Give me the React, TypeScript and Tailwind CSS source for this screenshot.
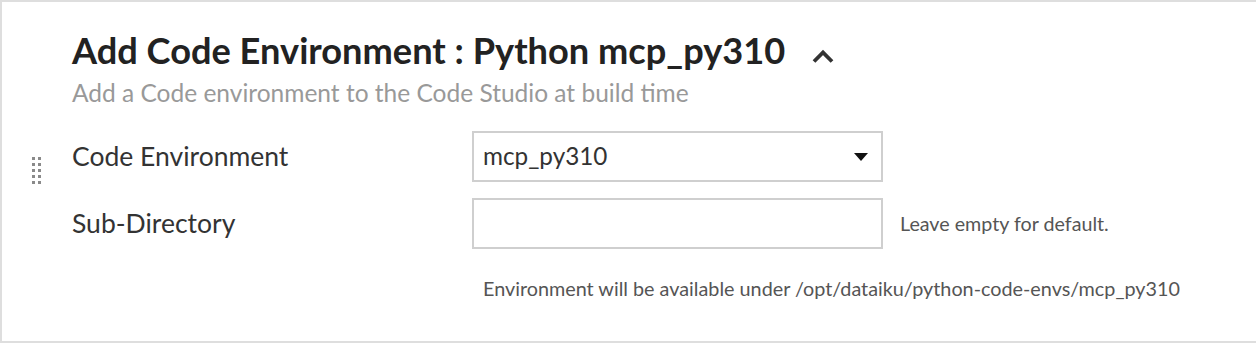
import React from 'react';

function DragHandle() {
  return (
    <div className="grid grid-cols-2 gap-x-[3px] gap-y-[3px] w-[9px]">
      {Array.from({ length: 10 }).map((_, i) => (
        <span key={i} className="block w-[3px] h-[3px] bg-[#8a8a8a]" />
      ))}
    </div>
  );
}

function ChevronUp() {
  return (
    <svg width="22" height="17" viewBox="0 0 22 17" className="text-[#333] mt-[19px] shrink-0">
      <path d="M2 13.5 L11 4.5 L20 13.5" fill="none" stroke="currentColor" strokeWidth="3.8" />
    </svg>
  );
}

export default function App() {
  return (
    <div className="w-[1256px] h-[346px] bg-white font-['Source_Sans_Pro','Lato',sans-serif] overflow-hidden">
      <div className="w-[1260px] h-[343px] border-2 border-r-0 border-[#dedede] flex">
        <div className="w-[70px] shrink-0 pt-[155px] pl-[30px]">
          <DragHandle />
        </div>
        <div className="flex-1 flex flex-col">
          <div className="flex items-start gap-[27px] mt-[27px]">
            <h2 className="text-[36.2px] leading-[43px] font-bold text-[#222]">
              Add Code Environment : Python mcp_py310
            </h2>
            <ChevronUp />
          </div>
          <p className="text-[24.5px] leading-[28px] text-[#999] mt-[7px]">
            Add a Code environment to the Code Studio at build time
          </p>

          <div className="flex items-center mt-[24px]">
            <label className="w-[400px] text-[26.5px] leading-[32px] text-[#333] -translate-y-[1px]">Code Environment</label>
            <div className="w-[411px] h-[51px] border-2 border-[#cfcfcf] flex items-center justify-between pl-[9px] pr-[13px]">
              <span className="text-[24.3px] text-[#333]">mcp_py310</span>
              <svg width="14" height="8" viewBox="0 0 14 8">
                <path d="M0 0 L14 0 L7 8 Z" fill="#111" />
              </svg>
            </div>
          </div>

          <div className="flex items-center mt-[16px]">
            <label className="w-[400px] text-[26.5px] leading-[32px] text-[#333] -translate-y-[1px]">Sub-Directory</label>
            <input className="w-[411px] h-[51px] border-2 border-[#cfcfcf] outline-none" />
            <span className="ml-[17px] text-[19.7px] text-[#555]">Leave empty for default.</span>
          </div>

          <p className="ml-[411px] mt-[27px] text-[19.8px] leading-[24px] text-[#555]">
            Environment will be available under /opt/dataiku/python-code-envs/mcp_py310
          </p>
        </div>
      </div>
    </div>
  );
}
